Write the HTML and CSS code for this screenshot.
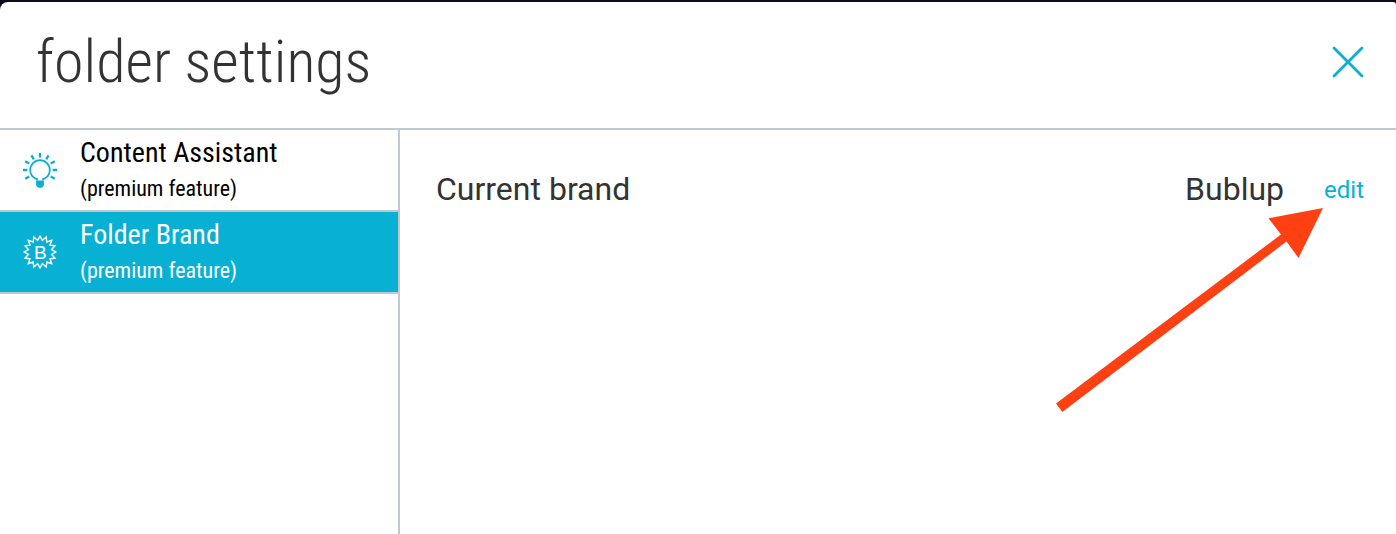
FILE: index.html
```
<!DOCTYPE html>
<html lang="en">
<head>
    <meta charset="UTF-8">
    <meta name="viewport" content="width=device-width, initial-scale=1.0">
    <title>folder settings</title>
    <link rel="stylesheet" href="styles.css">
</head>
<body>
    <div class="dialog">
        <header class="dialog-header">
            <h1>folder settings</h1>
            <button class="close-btn" aria-label="Close">
                <svg width="32" height="32" viewBox="0 0 32 32">
                    <path d="M2 2L30 30M30 2L2 30"/>
                </svg>
            </button>
        </header>

        <div class="dialog-body">
            <nav class="sidebar">
                <a class="item">
                    <svg class="icon" width="40" height="40" viewBox="0 0 40 40">
                        <path class="line" d="M17 30.2V29.2C12.8 27.8 10.2 24 10.2 20A9.8 9.8 0 0 1 29.8 20C29.8 24 27.2 27.8 23 29.2V30.2"/>
                        <path class="line ray" d="M20 3V7.6M11.4 5.4L13.8 9.4M28.6 5.4L26.2 9.4M5.2 11.2L9.2 13.5M34.8 11.2L30.8 13.5M3 20H7.4M37 20H32.6M5.2 28.8L9.2 26.5M34.8 28.8L30.8 26.5"/>
                        <path class="fill" d="M16.1 30.6H23.9V34.4Q23.4 37.8 20 37.8Q16.6 37.8 16.1 34.4Z"/>
                    </svg>
                    <div class="item-text">
                        <div class="item-title">Content Assistant</div>
                        <div class="item-note">(premium feature)</div>
                    </div>
                </a>
                <a class="item active">
                    <svg class="icon" width="40" height="40" viewBox="0 0 40 40">
                        <polygon class="line burst" points="20,4.2 22.4,8.4 26.2,5 26.8,10 31.7,8.3 30,13.2 35,13.8 31.6,17.6 35.8,20 31.6,22.4 35,26.2 30,26.8 31.7,31.7 26.8,30 26.2,35 22.4,31.6 20,35.8 17.6,31.6 13.8,35 13.2,30 8.3,31.7 10,26.8 5,26.2 8.4,22.4 4.2,20 8.4,17.6 5,13.8 10,13.2 8.3,8.3 13.2,10 13.8,5 17.6,8.4"/>
                        <text class="letter" x="20.4" y="27" text-anchor="middle">B</text>
                    </svg>
                    <div class="item-text">
                        <div class="item-title">Folder Brand</div>
                        <div class="item-note">(premium feature)</div>
                    </div>
                </a>
            </nav>

            <main class="content">
                <div class="brand-row">
                    <span class="brand-label">Current brand</span>
                    <span class="brand-name">Bublup</span>
                    <a class="edit">edit</a>
                </div>
            </main>
        </div>

        <!-- arrow pointing at the edit link -->
        <svg class="arrow" width="270" height="206" viewBox="0 0 270 206">
            <polygon points="267,0 242.5,50 230.5,33.5 6.3,204 0,195.5 225,26.5 212.5,10.2"/>
        </svg>
    </div>
</body>
</html>
```

FILE: styles.css
```
* {
    box-sizing: border-box;
}
body {
    margin: 0;
    padding-top: 2px;
    background: #0b0b1e;
    font-family: Roboto, sans-serif;
    color: #333;
}
.dialog {
    position: relative;
    display: flex;
    flex-direction: column;
    height: 532px;
    background: #fff;
    border-radius: 8px 3px 0 0;
    overflow: hidden;
}
.dialog-header {
    display: flex;
    align-items: center;
    justify-content: space-between;
    height: 128px;
    padding: 0 32px 6px 36px;
    border-bottom: 2px solid #bdcacf;
}
h1 {
    margin: 0;
    font-family: "Roboto Condensed", Roboto, sans-serif;
    font-stretch: 75%;
    font-size: 60px;
    font-weight: 300;
    line-height: 70px;
}
.close-btn {
    display: flex;
    padding: 0;
    border: none;
    background: none;
    cursor: pointer;
}
.close-btn path {
    stroke: #08b0d4;
    stroke-width: 2.8;
    stroke-linecap: round;
}
.dialog-body {
    display: flex;
    flex: 1;
}
.sidebar {
    width: 400px;
    border-right: 2px solid #bdcacf;
}
.item {
    display: flex;
    align-items: center;
    height: 82px;
    padding-left: 20px;
    gap: 20px;
    border-bottom: 2px solid #bdcacf;
    color: #000;
    cursor: pointer;
}
.item.active {
    background: #08b0d4;
    color: #fff;
}
.item-text {
    padding-top: 2px;
    font-family: "Roboto Condensed", Roboto, sans-serif;
    font-stretch: 75%;
    line-height: 36px;
}
.item-title {
    font-size: 28px;
}
.item-note {
    font-size: 22px;
}
.icon .line {
    fill: none;
    stroke: #08b0d4;
    stroke-width: 1.8;
}
.icon .ray {
    stroke-width: 2.3;
}
.icon .fill {
    fill: #08b0d4;
}
.icon .burst {
    stroke: #fff;
    stroke-width: 1.4;
}
.icon .letter {
    fill: #fff;
    font-family: "Liberation Sans", sans-serif;
    font-size: 19px;
}
.content {
    flex: 1;
    padding: 39px 32px 0 36px;
}
.brand-row {
    display: flex;
    align-items: center;
    height: 40px;
    font-size: 32px;
}
.brand-label {
    flex: 1;
}
.edit {
    margin-left: 40px;
    padding-top: 2px;
    color: #08b0d4;
    font-size: 24px;
    cursor: pointer;
}
.arrow {
    position: absolute;
    left: 1056px;
    top: 206px;
    fill: #ff4013;
}
```
